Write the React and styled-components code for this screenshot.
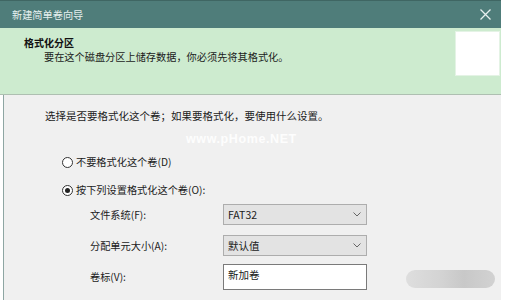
import React from "react";
import styled, { createGlobalStyle } from "styled-components";

const GlobalStyle = createGlobalStyle`
  html, body {
    margin: 0;
    padding: 0;
    background: #fff;
  }
  body {
    font-family: "Noto Sans CJK SC", "Noto Sans", sans-serif;
    font-size: 10px;
    color: #1b1b1b;
  }
`;

const Window = styled.div`
  position: relative;
  width: 501px;
  height: 300px;
  display: flex;
  flex-direction: column;
  overflow: hidden;
`;

const TitleBar = styled.div`
  height: 28px;
  flex: none;
  background: #4f7d7a;
  border-top: 1px solid #3f6663;
  box-sizing: border-box;
  display: flex;
  align-items: center;
  justify-content: space-between;
  padding: 0 6px 0 12px;
  color: #e6f0ef;
  font-size: 10.2px;
`;

const CloseButton = styled.div`
  width: 20px;
  height: 20px;
  display: flex;
  align-items: center;
  justify-content: center;
  svg {
    display: block;
  }
`;

const Header = styled.div`
  height: 67px;
  flex: none;
  box-sizing: border-box;
  background: #cdebcf;
  border-bottom: 1px solid #aebfb1;
  display: flex;
  justify-content: space-between;
  align-items: flex-start;
`;

const HeaderText = styled.div`
  padding: 8px 0 0 24px;
  line-height: 14px;
  h1 {
    margin: 0;
    font-size: 10px;
    font-weight: bold;
    color: #111;
  }
  p {
    margin: 0;
    padding-left: 20px;
    font-size: 10.2px;
  }
`;

const IconBox = styled.div`
  width: 43px;
  height: 43px;
  margin: 4px 2px 0 0;
  background: #fff;
  box-shadow: 0 0 0 1px #e4f3e5;
`;

const Content = styled.div`
  position: relative;
  flex: 1;
  min-height: 0;
  background: #f0f0f0;
  margin-left: 3px;
  border-left: 1px solid #8ea6a3;
  padding: 14px 0 0 41px;
  line-height: 14px;
`;

const Question = styled.div`
  font-size: 10.5px;
  margin-bottom: 32px;
`;

const RadioRow = styled.label`
  display: flex;
  align-items: center;
  margin-left: 17px;
  margin-bottom: ${(p) => p.$gap}px;
  font-size: 10.2px;
  gap: 3px;
`;

const RadioDot = styled.span`
  width: 9px;
  height: 9px;
  border-radius: 50%;
  border: 1px solid #333;
  background: #fff;
  display: flex;
  align-items: center;
  justify-content: center;
  &::after {
    content: "";
    width: 5px;
    height: 5px;
    border-radius: 50%;
    background: ${(p) => (p.$checked ? "#222" : "transparent")};
  }
`;

const FormGrid = styled.div`
  display: grid;
  grid-template-columns: 133px 144px;
  margin-left: 45px;
  align-items: center;
`;

const Label = styled.div`
  font-size: 10.2px;
  margin-bottom: ${(p) => p.$gap}px;
`;

const Select = styled.div`
  height: 21px;
  box-sizing: border-box;
  border: 1px solid #adadad;
  background: #e3e3e3;
  display: flex;
  align-items: center;
  justify-content: space-between;
  padding: 0 5px 0 4px;
  font-size: 10.5px;
  margin-bottom: ${(p) => p.$gap}px;
  font-family: "Noto Sans CJK SC", "Liberation Sans", sans-serif;
`;

const TextInput = styled.div`
  height: 26px;
  box-sizing: border-box;
  border: 1px solid #7a7a7a;
  background: #fff;
  padding: 3px 4px;
  font-size: 10.5px;
`;

const Watermark = styled.div`
  position: absolute;
  left: 182px;
  top: 37px;
  color: rgba(255, 255, 255, 0.9);
  font-family: "Liberation Sans", sans-serif;
  font-weight: bold;
  font-size: 12.5px;
  letter-spacing: 0.6px;
`;

const BlurBadge = styled.div`
  position: absolute;
  z-index: 2;
  right: 6px;
  bottom: 12px;
  width: 89px;
  height: 18px;
  border-radius: 9px;
  background: linear-gradient(
    90deg,
    #dedede 0%,
    #d3d3d3 40%,
    #c8c8c8 65%,
    #d2d2d2 100%
  );
`;

const Chevron = () => (
  <svg width="8" height="5" viewBox="0 0 8 5">
    <path d="M0.5 0.5 L4 4 L7.5 0.5" fill="none" stroke="#666" strokeWidth="1" />
  </svg>
);

const App = () => {
  return (
    <>
      <GlobalStyle />
      <Window>
        <TitleBar>
          <span>新建简单卷向导</span>
          <CloseButton>
            <svg width="11" height="11" viewBox="0 0 11 11">
              <path d="M0.5 0.5 L10.5 10.5 M10.5 0.5 L0.5 10.5" stroke="#e8f0ef" strokeWidth="1.3" />
            </svg>
          </CloseButton>
        </TitleBar>
        <Header>
          <HeaderText>
            <h1>格式化分区</h1>
            <p>要在这个磁盘分区上储存数据，你必须先将其格式化。</p>
          </HeaderText>
          <IconBox />
        </Header>
        <Content>
          <Question>选择是否要格式化这个卷；如果要格式化，要使用什么设置。</Question>
          <Watermark>www.pHome.NET</Watermark>
          <RadioRow $gap={14}>
            <RadioDot />
            不要格式化这个卷(D)
          </RadioRow>
          <RadioRow $gap={7}>
            <RadioDot $checked />
            按下列设置格式化这个卷(O):
          </RadioRow>
          <FormGrid>
            <Label $gap={10}>文件系统(F):</Label>
            <Select $gap={10}>
              <span>FAT32</span>
              <Chevron />
            </Select>
            <Label $gap={8}>分配单元大小(A):</Label>
            <Select $gap={8}>
              <span>默认值</span>
              <Chevron />
            </Select>
            <Label $gap={0}>卷标(V):</Label>
            <TextInput>新加卷</TextInput>
          </FormGrid>
          <BlurBadge />
        </Content>
      </Window>
    </>
  );
};

export default App;
